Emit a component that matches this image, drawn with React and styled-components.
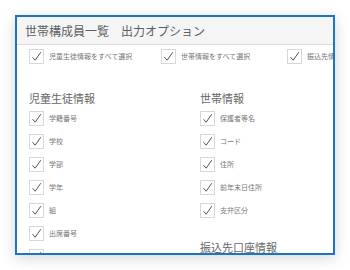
import React from "react";
import styled, { createGlobalStyle } from "styled-components";

const GlobalStyle = createGlobalStyle`
  html, body {
    margin: 0;
    background: #ffffff;
  }
  body {
    font-family: "Noto Sans CJK JP", "Noto Sans", sans-serif;
  }
`;

const Page = styled.div`
  width: 350px;
  height: 270px;
  padding: 15px;
  box-sizing: border-box;
`;

const Panel = styled.div`
  width: 320px;
  height: 240px;
  box-sizing: border-box;
  border: 2px solid #1b75c2;
  background: #fff;
  overflow: hidden;
  box-shadow: 0 3px 14px rgba(0, 0, 0, 0.16);
  display: flex;
  flex-direction: column;
`;

const Header = styled.div`
  height: 27px;
  flex-shrink: 0;
  background: #f5f5f5;
  border-bottom: 1px solid #dcdcdc;
  display: flex;
  align-items: center;
  padding-left: 8px;
`;

const Title = styled.div`
  font-size: 12px;
  color: #5e5e5e;
  white-space: pre;
  line-height: 1;
`;

const Body = styled.div`
  padding: 4px 0 0 12px;
  display: flex;
  flex-direction: column;
`;

const SelectAllRow = styled.div`
  display: flex;
  white-space: nowrap;
`;

const SelectAllItem = styled.div`
  flex: 0 0 ${({ $w }) => $w}px;
`;

const Columns = styled.div`
  display: grid;
  grid-template-columns: 171px 1fr;
  margin-top: 27px;
`;

const Column = styled.div`
  display: flex;
  flex-direction: column;
`;

const Heading = styled.div`
  font-size: 11px;
  line-height: 14px;
  color: #666;
  margin-top: ${({ $top }) => $top || 0}px;
  margin-bottom: 6px;
`;

const List = styled.div`
  display: flex;
  flex-direction: column;
  gap: 8px;
`;

const Row = styled.label`
  display: flex;
  align-items: center;
  gap: 5px;
  white-space: nowrap;
`;

const Box = styled.span`
  width: 15px;
  height: 15px;
  box-sizing: border-box;
  border: 1px solid #d8d8d8;
  background: #fff;
  display: flex;
  align-items: center;
  justify-content: center;
  flex-shrink: 0;
`;

const Label = styled.span`
  font-size: 7px;
  line-height: 1;
  color: #777;
`;

const Check = ({ children }) => (
  <Row>
    <Box>
      <svg width="13" height="13" viewBox="0 0 13 13">
        <path d="M2.5 7.2 L5.2 10.2 L10.8 2.2" fill="none" stroke="#555" strokeWidth="1" />
      </svg>
    </Box>
    <Label>{children}</Label>
  </Row>
);

const student = ["学籍番号", "学校", "学部", "学年", "組", "出席番号", "氏名"];
const household = ["保護者等名", "コード", "住所", "前年末日住所", "支弁区分"];

export default function App() {
  return (
    <>
      <GlobalStyle />
      <Page>
        <Panel>
          <Header>
            <Title>世帯構成員一覧　出力オプション</Title>
          </Header>
          <Body>
            <SelectAllRow>
              <SelectAllItem $w={132}>
                <Check>児童生徒情報をすべて選択</Check>
              </SelectAllItem>
              <SelectAllItem $w={126}>
                <Check>世帯情報をすべて選択</Check>
              </SelectAllItem>
              <SelectAllItem $w={120}>
                <Check>振込先情報をすべて選択</Check>
              </SelectAllItem>
            </SelectAllRow>
            <Columns>
              <Column>
                <Heading>児童生徒情報</Heading>
                <List>
                  {student.map((s) => (
                    <Check key={s}>{s}</Check>
                  ))}
                </List>
              </Column>
              <Column>
                <Heading>世帯情報</Heading>
                <List>
                  {household.map((s) => (
                    <Check key={s}>{s}</Check>
                  ))}
                </List>
                <Heading $top={22}>振込先口座情報</Heading>
              </Column>
            </Columns>
          </Body>
        </Panel>
      </Page>
    </>
  );
}
